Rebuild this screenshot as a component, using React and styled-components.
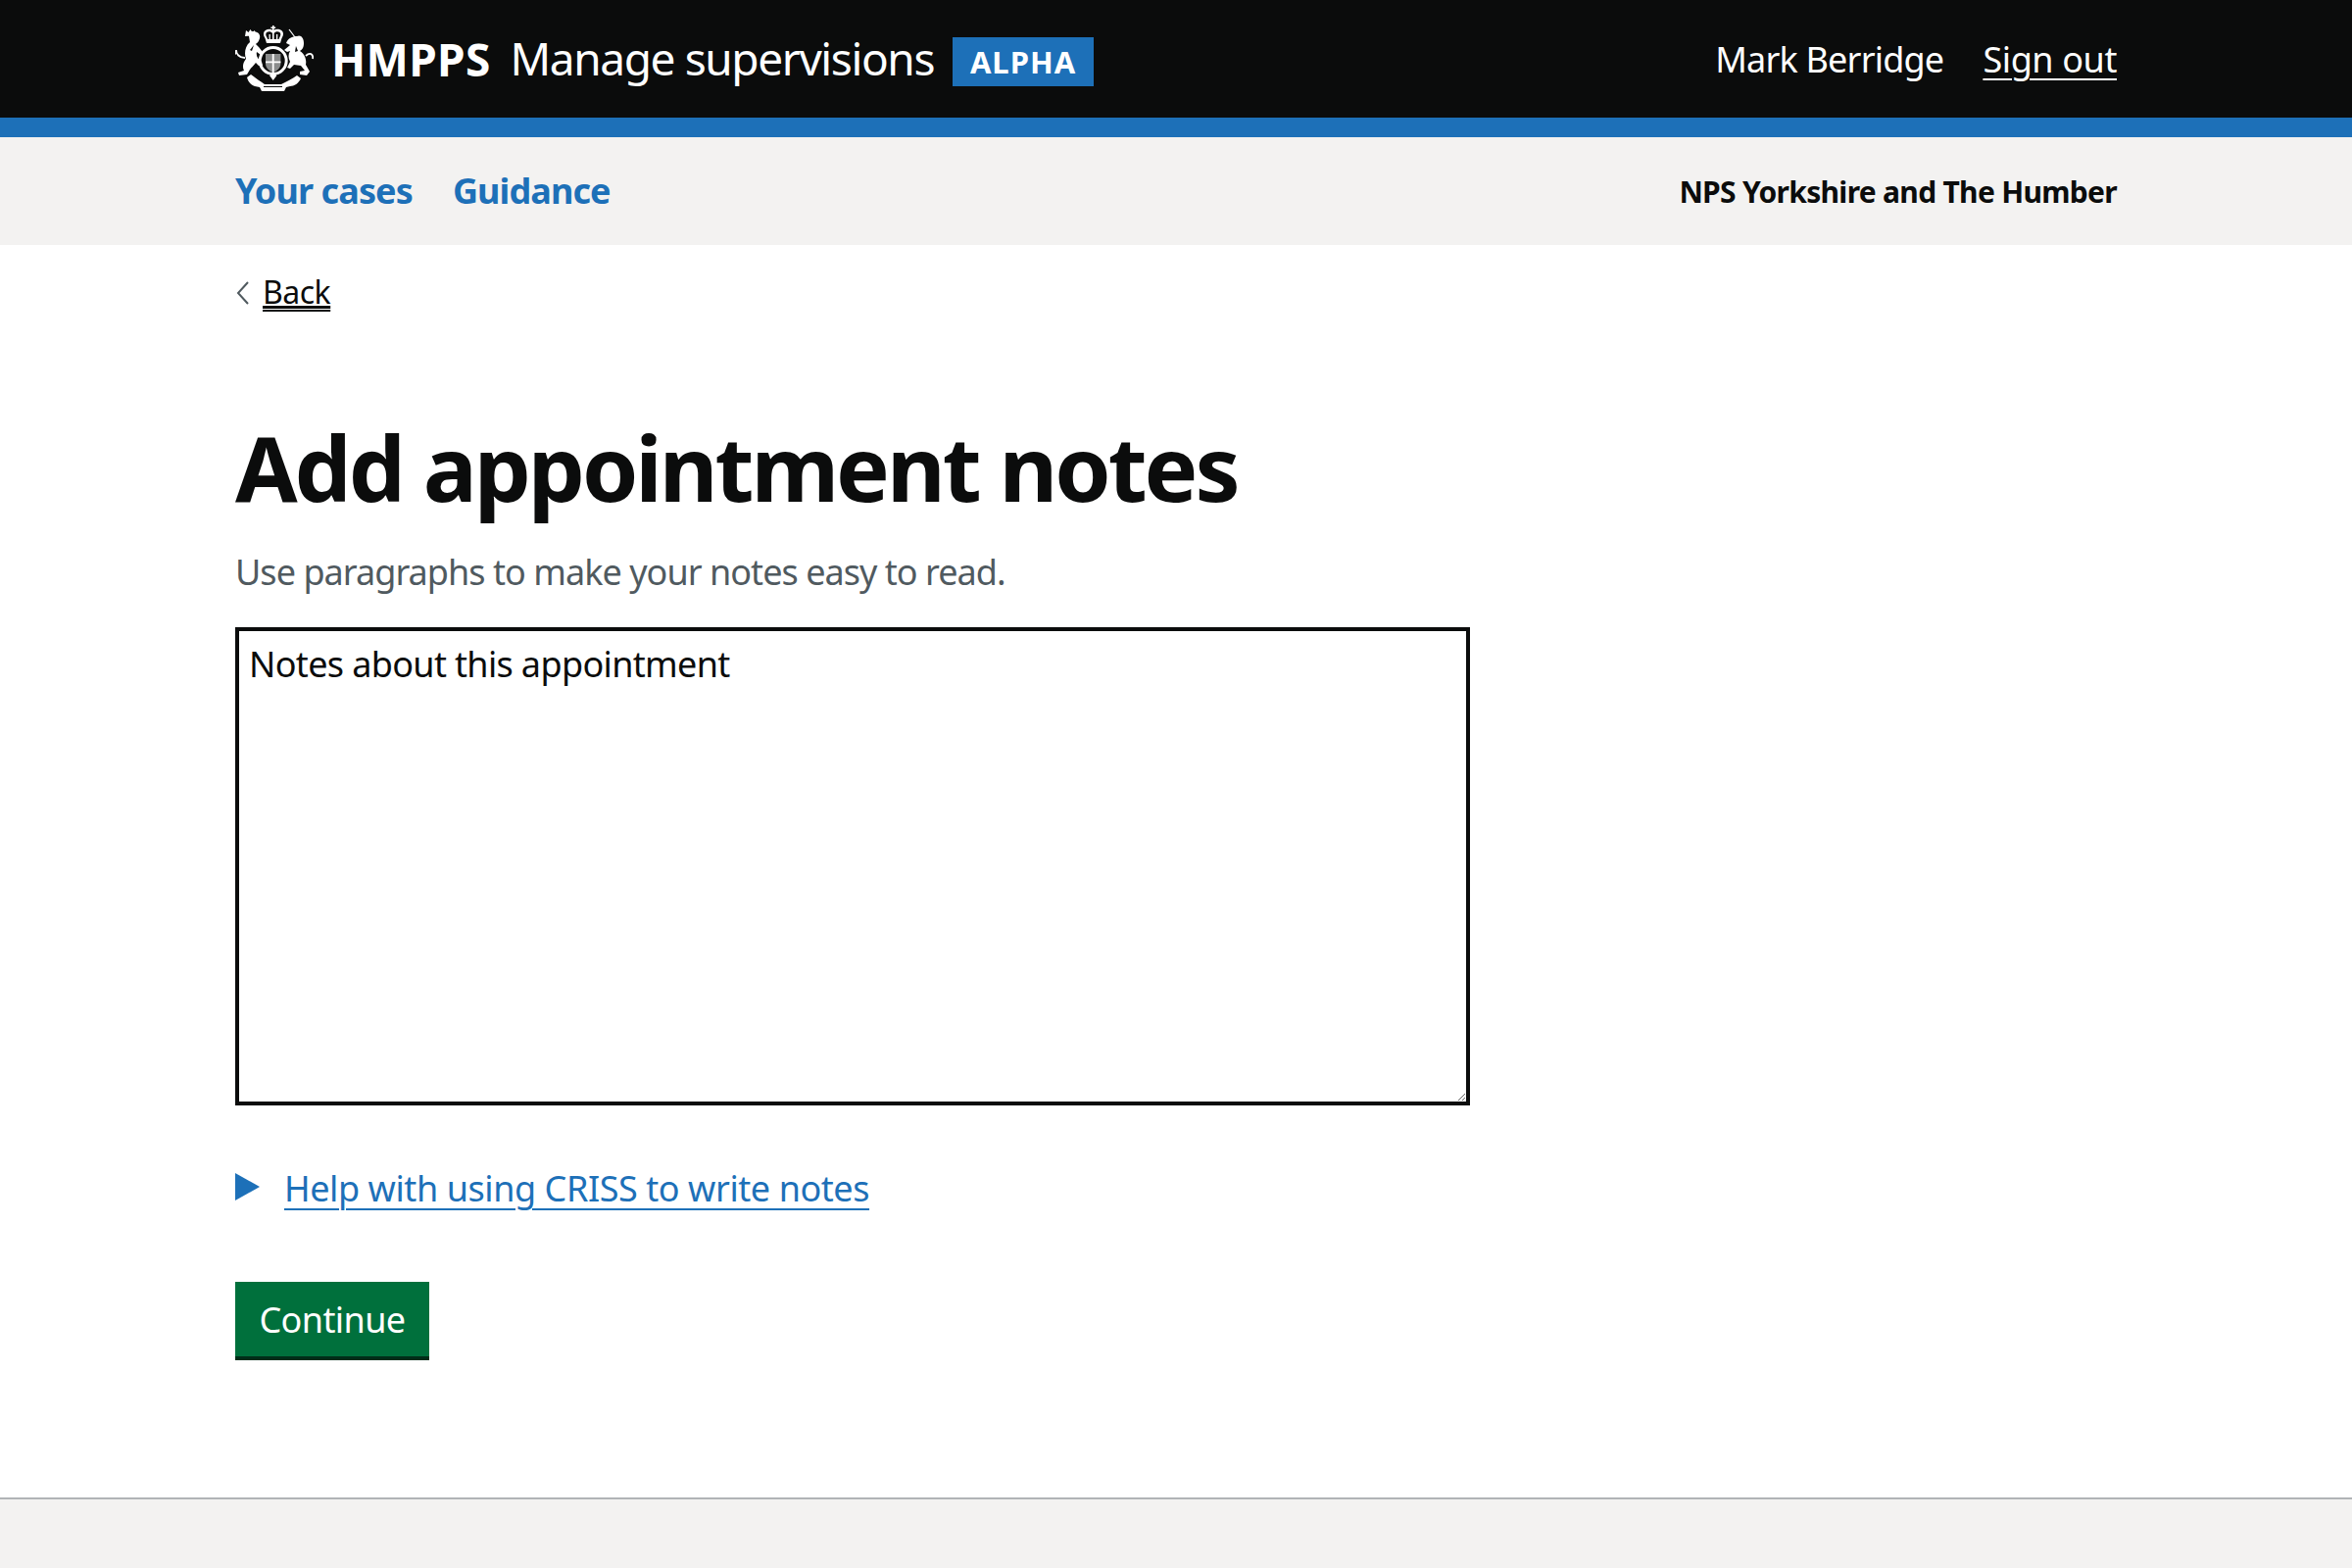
import React from "react";
import styled, { createGlobalStyle } from "styled-components";

const Global = createGlobalStyle`
  html, body { margin: 0; padding: 0; background: #fff; }
  body { font-family: "Noto Sans", "Liberation Sans", sans-serif; color: #0b0c0c; }
  * { box-sizing: border-box; }
`;
const Page = styled.div`
  height: 1600px;
  overflow: hidden;
  display: flex;
  flex-direction: column;
`;
const Header = styled.header`
  height: 140px;
  flex: none;
  background: #0b0c0c;
  border-bottom: 20px solid #1d70b8;
  padding: 0 240px;
  display: flex;
  align-items: center;
  justify-content: space-between;
`;
const Brand = styled.div`
  display: flex;
  align-items: center;
  color: #fff;
`;
const Organisation = styled.span`
  margin-left: 18px;
  font-size: 46px;
  font-weight: 700;
  letter-spacing: 0.3px;
`;
const Service = styled.span`
  margin: -3px 0 0 20px;
  font-size: 46px;
  letter-spacing: -1.4px;
`;
const PhaseTag = styled.span`
  margin: 6px 0 0 19px;
  width: 144px;
  height: 50px;
  background: #1d70b8;
  color: #fff;
  font-size: 31px;
  font-weight: 700;
  letter-spacing: 1px;
  display: flex;
  align-items: center;
  justify-content: center;
`;
const UserMenu = styled.div`
  display: flex;
  align-items: center;
  gap: 40px;
  color: #fff;
  font-size: 36px;
  letter-spacing: -0.8px;
`;
const SignOut = styled.a`
  color: #fff;
  letter-spacing: -0.4px;
  text-decoration: underline;
  text-decoration-thickness: 2px;
  text-underline-offset: 6px;
`;
const NavBar = styled.nav`
  height: 110px;
  flex: none;
  background: #f3f2f1;
  padding: 0 240px;
  display: flex;
  align-items: center;
  justify-content: space-between;
`;
const NavLinks = styled.div`
  display: flex;
  gap: 41px;
  margin-bottom: 2px;
`;
const NavLink = styled.a`
  color: #1d70b8;
  font-size: 36px;
  font-weight: 700;
  letter-spacing: -0.9px;
  text-decoration: none;
`;
const Region = styled.span`
  font-size: 30px;
  font-weight: 700;
  letter-spacing: -0.7px;
`;
const Main = styled.main`
  flex: 1;
  padding: 27px 240px 0;
`;
const BackLink = styled.a`
  display: inline-flex;
  align-items: center;
  gap: 12px;
  height: 40px;
  font-size: 32px;
  color: #0b0c0c;
`;
const BackChevron = styled.svg`
  width: 16px;
  height: 24px;
  margin-top: 4px;
  fill: none;
  stroke: #505a5f;
  stroke-width: 2;
`;
const BackText = styled.span`
  text-decoration: underline;
  text-decoration-thickness: 2px;
  text-underline-offset: 6px;
  letter-spacing: -0.5px;
`;
const Title = styled.h1`
  margin: 110px 0 0;
  font-size: 92px;
  line-height: 100px;
  font-weight: 700;
  letter-spacing: -3.05px;
`;
const Hint = styled.p`
  margin: 32px 0 0;
  color: #505a5f;
  font-size: 36px;
  line-height: 50px;
  letter-spacing: -0.96px;
`;
const NotesBox = styled.textarea`
  display: block;
  margin-top: 31px;
  width: 1260px;
  height: 488px;
  border: 4px solid #0b0c0c;
  border-radius: 0;
  padding: 9px 10px;
  background: #fff;
  color: #0b0c0c;
  font-family: inherit;
  font-size: 36px;
  line-height: 50px;
  letter-spacing: -0.65px;
  outline: none;
`;
const Details = styled.div`
  margin-top: 59px;
  display: flex;
  align-items: center;
  gap: 25px;
  height: 50px;
`;
const Arrow = styled.svg`
  width: 25px;
  height: 28px;
  margin-top: -2px;
  fill: #1d70b8;
`;
const HelpLink = styled.a`
  color: #1d70b8;
  font-size: 36px;
  letter-spacing: -0.43px;
  text-decoration: underline;
  text-decoration-thickness: 2px;
  text-underline-offset: 7px;
`;
const Button = styled.button`
  display: block;
  margin-top: 71px;
  width: 198px;
  height: 80px;
  border: 0;
  padding: 0 0 4px;
  background: #00703c;
  box-shadow: inset 0 -4px 0 #002d18;
  color: #fff;
  font-family: inherit;
  font-size: 36px;
  letter-spacing: -0.6px;
`;
const Footer = styled.footer`
  height: 72px;
  flex: none;
  background: #f3f2f1;
  border-top: 2px solid #b1b4b6;
`;

const Crest = () => (
  <svg width="80" height="68" viewBox="10 9 80 68" fill="#fff" aria-hidden="true">
    {/* crown */}
    <path d="M48 9h1.6v1.6h1.6v1.5h-1.6v2h-1.6v-2h-1.6v-1.5H48z" />
    <path fillRule="evenodd" d="M48.8 14c3-2 6-1.5 8.4 0 2.3 1.600 2.400 5 .3 8l-1.500 5h-14l-1.500-5c-2.100-3-2-6.400.3-8 2.400-1.500 5.400-2 8-0zm-6.300 1.700c-1.800 1-1.500 3.500 0 5.800l.6 1.500h11.400l.6-1.500c1.500-2.300 1.800-4.800 0-5.800-2-1-4.100-.5-5.600 1.300h-1.400c-1.500-1.800-3.600-2.300-5.600-1.300z" />
    <path d="M48 16h1.600v7H48zM44.500 18h1.300v5h-1.300zM52 18h1.300v5H52z" />
    {/* ring and shield */}
    <circle cx="48.700" cy="45" r="13.500" fill="none" stroke="#fff" strokeWidth="3" />
    <path d="M41 38h15.400v10c0 4.500-3.500 7-7.700 9-4.200-2-7.700-4.500-7.700-9z" fill="#8a8c8c" />
    <path d="M47.800 38h1.800v19h-1.800zM41 45.500h15.400v1.800H41z" />
    {/* lion */}
    <path d="M24 20C22 17 24 15 28 15c5 0 8 3 7 7-1 4-3 5-4 6l3 3 4 5-2 3-4-3c-1 4 1 7 5 10l1 4h-4l-3-3c-2 3-5 5-6 7l-3 5-8 1-1-3 6-2c-2-4-1-8 2-12-2-5-1-13 4-17z" />
    <path d="M20 20l1-6 2.500 2 2-3 2 3 2.500-2 .5 5z" />
    <path d="M20 42c-6 0-9-4-9-8" fill="none" stroke="#fff" strokeWidth="1.800" />
    <path d="M11 34c-2 1-3 2-4 4 2-.5 3 0 4 1z" />
    <path d="M29 29l-2 6-2-1z" fill="#0b0c0c" />
    {/* unicorn */}
    <path d="M62 27c2-5 6-7 11-7 4-2 7 2 7 7 0 5-2 7-4 8 5 3 7 9 6 14l4 7-3 4-7-1v-3l5-1-4-5-7-1-4 4-3-1 3-6c-2-4-2-8 0-11l-3 1-3-2 6-5z" />
    <path d="M65 13l6 8" fill="none" stroke="#fff" strokeWidth="1.200" />
    <path d="M82 40c4-4 8-2 7 3" fill="none" stroke="#fff" strokeWidth="1.800" />
    <path d="M72 30l2 5-3 1z" fill="#0b0c0c" />
    {/* motto scroll */}
    <path d="M22 62l4-3c5 4 10 7 14 10h17c6-3 12-6 16-9l4 3c-2 5-7 8-11 8l-4 1-2 4H37l-2-4-5-1c-4-1-7-5-8-9z" />
    <path d="M39 71.500h19" fill="none" stroke="#0b0c0c" strokeWidth="1" />
    <path d="M45 60l3.700-3 3.700 3-3.700 5z" />
  </svg>
);

export default function App() {
  return (
    <Page>
      <Global />
      <Header>
        <Brand>
          <Crest />
          <Organisation>HMPPS</Organisation>
          <Service>Manage supervisions</Service>
          <PhaseTag>ALPHA</PhaseTag>
        </Brand>
        <UserMenu>
          <span>Mark Berridge</span>
          <SignOut href="#">Sign out</SignOut>
        </UserMenu>
      </Header>
      <NavBar>
        <NavLinks>
          <NavLink href="#">Your cases</NavLink>
          <NavLink href="#">Guidance</NavLink>
        </NavLinks>
        <Region>NPS Yorkshire and The Humber</Region>
      </NavBar>
      <Main>
        <BackLink href="#">
          <BackChevron viewBox="0 0 16 24">
            <path d="M13 1L3 12l10 11" />
          </BackChevron>
          <BackText>Back</BackText>
        </BackLink>
        <Title>Add appointment notes</Title>
        <Hint>Use paragraphs to make your notes easy to read.</Hint>
        <NotesBox defaultValue="Notes about this appointment" />
        <Details>
          <Arrow viewBox="0 0 25 28"><path d="M0 0l25 14L0 28z" /></Arrow>
          <HelpLink href="#">Help with using CRISS to write notes</HelpLink>
        </Details>
        <Button>Continue</Button>
      </Main>
      <Footer />
    </Page>
  );
}
